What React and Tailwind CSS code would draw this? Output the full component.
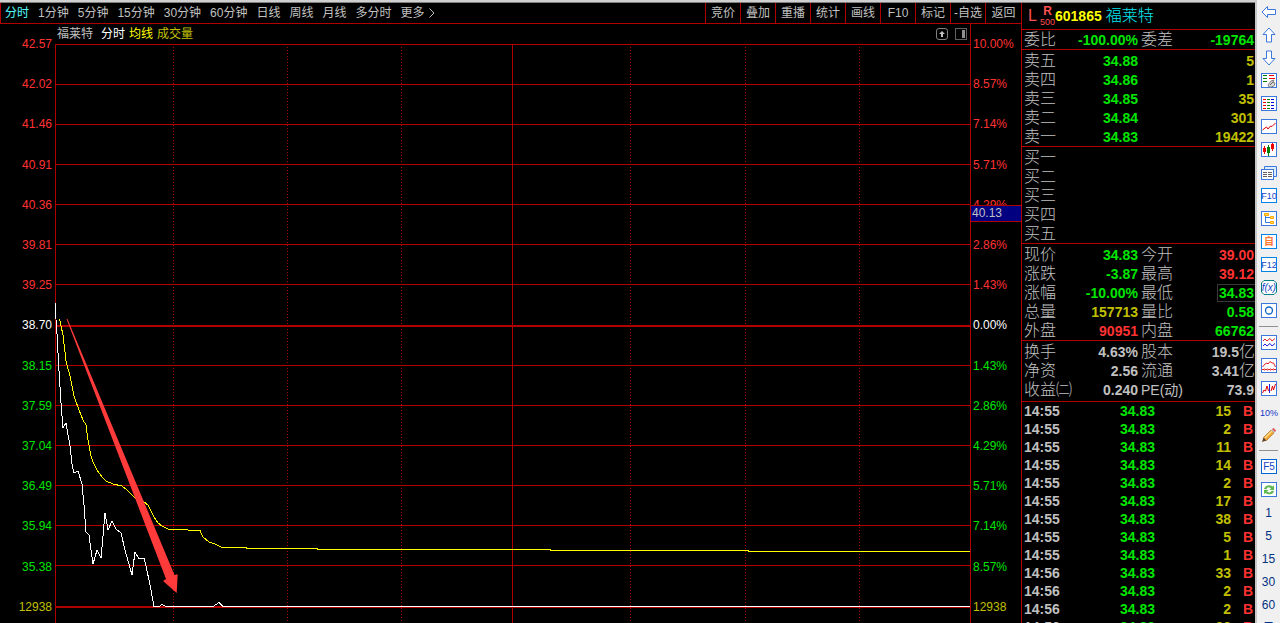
import React from 'react'

const TABS = ['分时', '1分钟', '5分钟', '15分钟', '30分钟', '60分钟', '日线', '周线', '月线', '多分时']
const ACTIONS = ['竞价', '叠加', '重播', '统计', '画线', 'F10', '标记', '-自选', '返回']

const RED = 'text-[#ff3232]'
const GREEN = 'text-[#00e600]'
const GRAY = 'text-[#c0c0c0]'
const OLIVE = 'text-[#c0c000]'
const WHITE = 'text-white'

const PRICES = ['42.57', '42.02', '41.46', '40.91', '40.36', '39.81', '39.25', '38.70', '38.15', '37.59', '37.04', '36.49', '35.94', '35.38', '12938']
const PERCENTS = ['10.00%', '8.57%', '7.14%', '5.71%', '4.29%', '2.86%', '1.43%', '0.00%', '1.43%', '2.86%', '4.29%', '5.71%', '7.14%', '8.57%', '12938']

const GRID_Y = [0, 40, 80, 120, 160, 200, 240, 321, 361, 401, 441, 481, 521]
const DOTTED_X = [118, 232, 346, 575, 690, 804]

const SELLS = [['卖五', '34.88', '5'], ['卖四', '34.86', '1'], ['卖三', '34.85', '35'], ['卖二', '34.84', '301'], ['卖一', '34.83', '19422']]
const BUYS = ['买一', '买二', '买三', '买四', '买五']

const QUOTES = [
  ['现价', '34.83', GREEN, '今开', '39.00', RED],
  ['涨跌', '-3.87', GREEN, '最高', '39.12', RED],
  ['涨幅', '-10.00%', GREEN, '最低', '34.83', GREEN],
  ['总量', '157713', OLIVE, '量比', '0.58', GREEN],
  ['外盘', '90951', RED, '内盘', '66762', GREEN],
]
const FUNDAMENTALS = [
  ['换手', '4.63%', GRAY, '股本', '19.5亿', GRAY],
  ['净资', '2.56', GRAY, '流通', '3.41亿', GRAY],
  ['收益㈡', '0.240', GRAY, 'PE(动)', '73.9', GRAY],
]
const TICKS = [
  ['14:55', 15], ['14:55', 2], ['14:55', 11], ['14:55', 14], ['14:55', 2], ['14:55', 17],
  ['14:55', 38], ['14:55', 5], ['14:55', 1], ['14:56', 33], ['14:56', 2], ['14:56', 2], ['14:56', 28],
]

function axisColor(i) {
  if (i === 14) return OLIVE
  if (i === 7) return WHITE
  return i < 7 ? RED : GREEN
}

function TopBar() {
  return (
    <header className="flex h-[21px] shrink-0 items-stretch justify-between border-b border-l border-[#b00000] text-xs leading-5">
      <nav className="flex gap-[9px] overflow-hidden pl-1 whitespace-nowrap">
        {TABS.map((t, i) => (
          <button key={t} type="button" className={i === 0 ? 'text-[#54fcfc]' : GRAY}>{t}</button>
        ))}
        <button type="button" className={'flex items-center gap-1 ' + GRAY}>
          更多
          <svg width="6" height="10" viewBox="0 0 6 10" fill="none" stroke="currentColor"><path d="M0.5 0.5 5 5 0.5 9.5" /></svg>
        </button>
      </nav>
      <div className="flex shrink-0">
        {ACTIONS.map((t) => (
          <button key={t} type="button" className="w-[35px] border-l border-[#b00000] text-center whitespace-nowrap text-[#c0c0c0] last:w-9">{t}</button>
        ))}
      </div>
    </header>
  )
}

function Plot() {
  return (
    <svg className="block min-h-0 w-full flex-1" viewBox="0 0 915 579" preserveAspectRatio="none" fill="none">
      <g stroke="#b00000" shapeRendering="crispEdges">
        {GRID_Y.map((y) => <path key={y} d={`M0 ${y + 0.5}H915`} />)}
        <path d="M0 282H915" strokeWidth="2" />
        <path d="M0 563H915" strokeWidth="2" />
        <path d="M0.5 0V579" />
        <path d="M457.5 0V579" />
        {DOTTED_X.map((x) => <path key={x} d={`M${x + 0.5} 3V579`} strokeDasharray="1 2" />)}
      </g>
      <path
        stroke="#ffff00" shapeRendering="crispEdges"
        d="M4.5 275 8 291 11 317 15 332 19 352 24 366 28 376 31 381 33 396 36 412 38 418 42 426 47 433 51 437 58 440 67 442 72 446 78 452 83 456 89 458 93 461 96 467 99 473 103 479 107 482 113 485 120 485.5 145 486.5 148 493 154 498 160 500 167 503.5 190 503.5 193 504.5H262V505.5H495V506.5H693V507.5H915"
      />
      <path
        stroke="#ffffff" shapeRendering="crispEdges"
        d="M0.5 259V268L2 290 4 327 6 359 8 384 11 379 15 402 17 420 19 429 23 427 27 440 29 461 31 488 34 491 36 506 38 520 42 506 46 514 48 492 50 469 53 486 57 477 61 485 66 489 70 506 77 531 80 508 84 515 89 514 91 522 95 541 99 562.5H104L107 560.5 111 562.5H158L164 558.5 168 562.5H915"
      />
      <path fill="#ff3a3a" d="M11.5 275 12.5 275 119.500 531 122.700 530.300 121.700 549 108 537 111 535Z" />
    </svg>
  )
}

function Chart() {
  return (
    <section className="flex min-h-0 flex-1 text-xs leading-4">
      <ol className="flex w-[55px] shrink-0 flex-col justify-between pt-3 pr-[3px] pb-2 text-right">
        {PRICES.map((p, i) => <li key={i} className={axisColor(i)}>{p}</li>)}
      </ol>
      <div className="flex min-w-0 flex-1 flex-col">
        <div className="flex h-5 shrink-0 items-center justify-between pl-0.5">
          <div className="flex gap-1">
            <span className={'mr-1 ' + GRAY}>福莱特</span>
            <span className="text-white">分时</span>
            <span className="text-[#ffff00]">均线</span>
            <span className="text-[#c0c000]">成交量</span>
          </div>
          <div className="flex gap-[7px] pr-[3px]">
            <button type="button" aria-label="上移">
              <svg width="12" height="12" viewBox="0 0 12 12" fill="none" stroke="#808080"><rect x="0.5" y="0.5" width="11" height="11" rx="2.5" /><path d="M6 3 9 6H7V9H5V6H3Z" fill="#c0c0c0" stroke="none" /></svg>
            </button>
            <button type="button" aria-label="侧栏">
              <svg width="12" height="12" viewBox="0 0 12 12" fill="none" stroke="#606060"><rect x="0.5" y="0.5" width="11" height="11" /><path d="M7 2H10V10H7Z" fill="#909090" stroke="none" /></svg>
            </button>
          </div>
        </div>
        <Plot />
      </div>
      <div className="relative flex w-[51px] shrink-0 border-l border-[#b00000]">
        <ol className="flex flex-col justify-between pt-3 pb-2 pl-0.5">
          {PERCENTS.map((p, i) => <li key={i} className={axisColor(i)}>{p}</li>)}
        </ol>
        <div className="absolute top-[181px] left-0 h-[17px] w-full border-y border-[#b00000] bg-[#000080] pl-px leading-[15px] text-[#c0c0c0]">40.13</div>
      </div>
    </section>
  )
}

const LABEL = 'pl-0.5 text-left text-base leading-[18px] font-light whitespace-nowrap text-[#c0c0c0] '

function PairTable({ rows, boxed }) {
  return (
    <table className="w-full table-fixed border-collapse">
      <colgroup><col className="w-[50px]" /><col className="w-[66px]" /><col className="w-[50px]" /><col /></colgroup>
      <tbody>
        {rows.map(([a, b, bc, c, d, dc]) => (
          <tr key={a} className="h-[19px] leading-[18px]">
            <th scope="row" className={LABEL}>{a}</th>
            <td className={'text-right font-bold ' + bc}>{b}</td>
            <th scope="row" className={'pl-[3px] text-left leading-[18px] whitespace-nowrap text-[#c0c0c0] ' + (c.startsWith('PE') ? 'text-sm font-normal' : 'text-base font-light')}>{c}</th>
            <td className={'font-bold ' + dc}>
              <div className="flex h-[18px] items-center justify-end">
                {boxed === c
                  ? <span className="border border-r-0 border-[#383838] pr-px pl-px leading-4">{d}</span>
                  : d.endsWith('亿')
                    ? <><span>{d.slice(0, -1)}</span><span className="text-base leading-[18px] font-light">亿</span></>
                    : <span className="pr-px">{d}</span>}
              </div>
            </td>
          </tr>
        ))}
      </tbody>
    </table>
  )
}

function QuotePanel() {
  const line = 'border-b border-[#b00000]'
  return (
    <aside className="flex w-[234px] shrink-0 flex-col overflow-hidden border-l border-[#b00000] text-sm leading-[18px]">
      <h1 className={'flex h-[27px] shrink-0 items-center pl-1.5 ' + line}>
        <span className="w-3 text-base text-[#ff5050]">L</span>
        <span className="flex w-[15px] flex-col items-center text-[9px] leading-[10px] text-[#ff5050]">
          <b className="text-xs leading-[11px]">R</b><span>500</span>
        </span>
        <span className="font-bold text-[#ffff00]">601865</span>
        <span className="pl-1 text-base font-light text-[#00e6f0]">福莱特</span>
      </h1>
      <div className={'shrink-0 ' + line}>
        <PairTable rows={[['委比', '-100.00%', GREEN, '委差', '-19764', GREEN]]} />
      </div>
      <div className={'shrink-0 pt-px ' + line}>
        <table className="w-full table-fixed border-collapse">
          <colgroup><col className="w-[50px]" /><col className="w-[66px]" /><col /></colgroup>
          <tbody>
            {SELLS.map(([n, p, v]) => (
              <tr key={n} className="h-[19px]">
                <th scope="row" className={LABEL}>{n}</th>
                <td className="text-right font-bold text-[#00e600]">{p}</td>
                <td className="pr-px text-right font-bold text-[#c0c000]">{v}</td>
              </tr>
            ))}
          </tbody>
        </table>
      </div>
      <ul className={'shrink-0 pt-px pl-0.5 text-base leading-[19px] font-light text-[#c0c0c0] ' + line}>
        {BUYS.map((n) => <li key={n}>{n}</li>)}
      </ul>
      <div className={'shrink-0 pt-px ' + line}><PairTable rows={QUOTES} boxed="最低" /></div>
      <div className={'shrink-0 pt-px pb-0.5 ' + line}><PairTable rows={FUNDAMENTALS} /></div>
      <div className="min-h-0 flex-1 overflow-hidden">
        <table className="w-full table-fixed border-collapse font-bold">
          <colgroup><col className="w-[60px]" /><col /><col className="w-[76px]" /><col className="w-[24px]" /></colgroup>
          <tbody>
            {TICKS.map(([t, v], i) => (
              <tr key={i} className="h-[18px]">
                <td className="pl-0.5 text-[#c0c0c0]">{t}</td>
                <td className="text-right text-[#00e600]">34.83</td>
                <td className="text-right text-[#c0c000]">{v}</td>
                <td className="pr-0.5 text-right text-[#ff3232]">B</td>
              </tr>
            ))}
          </tbody>
        </table>
      </div>
    </aside>
  )
}

const BLUE = '#3c78dc'

function Icon({ children, frame = BLUE }) {
  return (
    <svg width="16" height="16" viewBox="0 0 16 16" fill="none">
      {frame && <rect x="0.5" y="0.5" width="15" height="14" fill="#fff" stroke={frame} />}
      {children}
    </svg>
  )
}

function Label({ children }) {
  return <text x="8" y="11" textAnchor="middle" fontSize="9" fill="#1446c8">{children}</text>
}

const TOOLS = [
  ['后退', <Icon frame={null}><path d="M1 8 6.5 2.5V5.5H14.5V10.5H6.5V13.5Z" fill="#fff" stroke={BLUE} /></Icon>],
  ['向上', <Icon frame={null}><path d="M8 1 14 7.5H10.5V15H5.5V7.5H2Z" fill="#fff" stroke={BLUE} /></Icon>],
  ['向下', <Icon frame={null}><path d="M8 15 14 8.5H10.5V1H5.5V8.5H2Z" fill="#fff" stroke={BLUE} /></Icon>],
  ['行情设置', <Icon><path d="M2 2.5H6M2 5.5H6M2 8.5H6" stroke="#008000" /><path d="M8 2.5H13M8 5.5H14" stroke="#f00000" /><path d="M7 12 10 8 13 7 12 9 14 10 13 13 10 14 8 14Z" fill="#d8d8d8" stroke="#808080" /><path d="M9 12 12 9" stroke="#606060" /></Icon>],
  ['列表', <Icon><g strokeDasharray="1 2" strokeWidth="3" shapeRendering="crispEdges"><path d="M3.5 3V13" stroke="#f00000" /><path d="M7.5 3V13" stroke="#008000" /><path d="M11.5 3V13" stroke="#0000e0" /></g></Icon>],
  ['走势', <Icon><path d="M1.5 11 4 9 5.5 8 7 10 9.5 7 11 7.5 14.5 4" stroke="#e00000" /></Icon>],
  ['K线', <Icon><path d="M3.5 4V12M11.5 1V9" stroke="#f00000" /><path d="M2 6H5V10H2ZM10 2H13V7H10Z" fill="#f00000" /><path d="M7.5 3V14" stroke="#008000" /><path d="M6 5H9V11H6Z" fill="#008000" /></Icon>],
  ['多窗口', <Icon frame={null}><path d="M3.5 4V1.5H15.5V11.5H13" fill="#dcecff" stroke={BLUE} /><rect x="0.5" y="4.5" width="12" height="10" fill="#fff" stroke={BLUE} /><path d="M2 7.5H6M7 7.5H11M2 9.5H6M7 9.5H11M2 11.5H6M7 11.5H11" stroke="#606060" /></Icon>],
  ['基本资料', <Icon frame="#0082e6"><Label>F10</Label></Icon>],
  ['板块', <Icon><path d="M4.5 5V11.5H9M4.5 6.5H9" stroke={BLUE} /><path d="M3.5 2.5H7.5V4.5H3.5ZM9.5 5.5H12.5V7.5H9.5ZM9.5 10.5H12.5V12.5H9.5Z" fill="#ffdc50" stroke="#ffa800" /></Icon>],
  ['自选股', <Icon frame="#0082e6"><text x="8" y="11" textAnchor="middle" fontSize="10" fontWeight="bold" fill="#ff7832">自</text></Icon>],
  ['F12', <Icon frame="#0082e6"><Label>F12</Label></Icon>],
  ['公式', <Icon frame={null}><path d="M3 0.5H13L15.5 3V12L13 14.5H3L0.5 12V3Z" fill="#fff" stroke="#008080" /><text x="8" y="11" textAnchor="middle" fontSize="10" fontStyle="italic" fill="#1446c8">f(x)</text></Icon>],
  ['圆形', <Icon><circle cx="8" cy="7.5" r="3.5" stroke="#1464c8" strokeWidth="1.3" /></Icon>],
  null,
  ['叠加线', <Icon><path d="M2 6 4 4 6 6 9 3.5 11 6 14 3.5" stroke="#e02020" /><path d="M2 11 4 9 6 11 9 8.5 11 11 14 8.5" stroke="#2020e0" /></Icon>],
  ['区间', <Icon><path d="M1.5 9 4 6 6 5 7 6 9 3.5 11 5 12.5 5 14.5 9" stroke="#e02020" /><path d="M1 11.5H15" stroke="#e02020" /><path d="M3.5 10V13M6.5 10V13M9.5 10V13M12.5 10V13" stroke="#f09090" /></Icon>],
  ['波动', <Icon><path d="M1.5 12 3 9 4.5 10 6 5 7.5 10M10 10 11.5 5 12.5 9 14.5 3" stroke="#e00000" /><path d="M8.5 3V12" stroke="#2020e0" /></Icon>],
  ['涨幅线', <svg width="20" height="16" viewBox="0 0 20 16"><text x="10" y="12" textAnchor="middle" fontSize="9" fill="#1432c8">10%</text></svg>],
  ['画笔', <Icon frame={null}><path d="M1 15 2.5 10.5 5.5 13.5Z" fill="#604020" /><path d="M2.5 10.5 10 3 13 6 5.5 13.5Z" fill="#f0a830" stroke="#a06020" strokeWidth="0.6" /><path d="M4 11 11 4" stroke="#ffe090" strokeWidth="1.2" /><path d="M10 3 11 2 14 5 13 6Z" fill="#c0c0c0" /><path d="M11 2 12.5 1 15 3.5 14 5Z" fill="#e05050" /></Icon>],
  null,
  ['F5', <Icon frame="#0064d2"><text x="8" y="11" textAnchor="middle" fontSize="10" fill="#1446c8">F5</text></Icon>],
  ['刷新', <Icon><path d="M3 7C4 3 9 2 11.5 4.5L13 3.5V8H8.5L10 6.5C8 4.5 6 5 5.5 7.5ZM13 9C12 13 7 13 4.5 11L3 12V8H7.5L6 9.5C8 11 10 10.5 10.5 9Z" fill="#60b850" /></Icon>],
  ['1分钟', '1'], ['5分钟', '5'], ['15分钟', '15'], ['30分钟', '30'], ['60分钟', '60'],
  ['日线', '日'],
]

function Toolbar() {
  return (
    <aside className="flex w-[25px] shrink-0 flex-col overflow-hidden border-l-2 border-[#c8c8c8] bg-[#f0f0f0] text-xs text-[#003282]">
      {TOOLS.map((t, i) => t === null
        ? <hr key={i} className="my-1 ml-0.5 h-px w-[19px] shrink-0 border-0 bg-[#909090]" />
        : <button key={i} type="button" aria-label={t[0]} className="flex h-[23px] w-full shrink-0 items-center justify-center">{t[1]}</button>)}
    </aside>
  )
}

export default function App() {
  return (
    <div className="flex h-screen overflow-hidden bg-black font-['Liberation_Sans','Noto_Sans_CJK_SC',sans-serif]">
      <div className="flex min-w-0 flex-1 flex-col">
        <div className="h-[3px] shrink-0 border-b border-[#808080] bg-[#d0d0d0]" />
        <div className="flex min-h-0 flex-1">
          <main className="flex min-w-0 flex-1 flex-col">
            <TopBar />
            <Chart />
          </main>
          <QuotePanel />
        </div>
      </div>
      <Toolbar />
    </div>
  )
}
